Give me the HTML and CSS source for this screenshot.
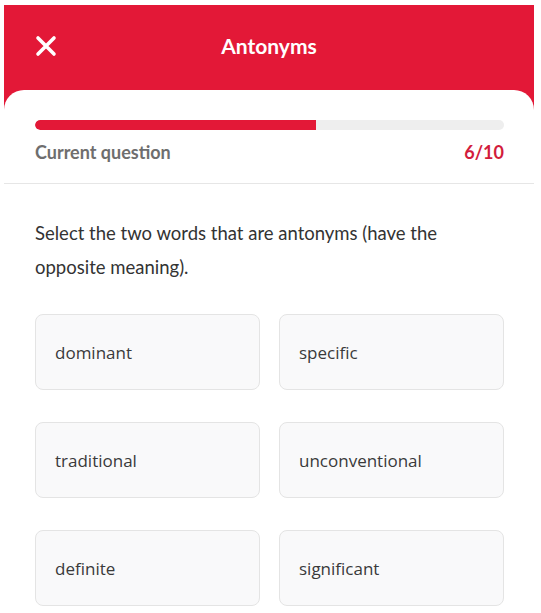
FILE: index.html
```html
<!DOCTYPE html>
<html lang="en">
<head>
  <meta charset="UTF-8" />
  <meta name="viewport" content="width=device-width, initial-scale=1.0"/>
  <title>Antonyms</title>
  <link rel="stylesheet" href="styles.css">
</head>
<body>

<div class="screen">
  <!-- Header -->
  <header class="top-bar">
    <button class="close-btn" aria-label="Close">
      <svg width="22" height="22" viewBox="0 0 22 22">
        <path d="M3 3 L19 19 M19 3 L3 19" stroke="#fff" stroke-width="3.6" stroke-linecap="round" fill="none"/>
      </svg>
    </button>
    <h1 class="title">Antonyms</h1>
  </header>

  <!-- Quiz card -->
  <main class="card">
    <div class="progress">
      <div class="progress-track">
        <div class="progress-fill" style="width: 60%"></div>
      </div>
      <div class="progress-info">
        <span class="progress-label">Current question</span>
        <span class="progress-count">6/10</span>
      </div>
    </div>

    <div class="question">
      <p class="question-text">Select the two words that are antonyms (have the opposite meaning).</p>
      <div class="options">
        <button class="option">dominant</button>
        <button class="option">specific</button>
        <button class="option">traditional</button>
        <button class="option">unconventional</button>
        <button class="option">definite</button>
        <button class="option">significant</button>
      </div>
    </div>
  </main>
</div>

</body>
</html>
```

FILE: styles.css
```css
body {
  margin: 0;
  background: #fff;
  font-family: Lato, "Liberation Sans", sans-serif;
}
.screen {
  margin: 5px 7px 0 4px;
}
.top-bar {
  background: #e31837;
  height: 105px;
  display: flex;
  align-items: flex-start;
  padding: 0 31px;
  position: relative;
}
.close-btn {
  background: none;
  border: none;
  padding: 0;
  margin-top: 30px;
  width: 22px;
  height: 22px;
  cursor: pointer;
}
.title {
  flex: 1;
  margin: 28px 22px 0 0;
  color: #fff;
  font-size: 21px;
  font-weight: 700;
  text-align: center;
}
.card {
  background: #fff;
  border-radius: 20px 20px 0 0;
  margin-top: -20px;
  position: relative;
}
.progress {
  padding: 30px 30px 0 31px;
  border-bottom: 1px solid #e6e6e6;
  height: 63px;
}
.progress-track {
  height: 10px;
  border-radius: 5px;
  background: #eeeeee;
  overflow: hidden;
}
.progress-fill {
  height: 100%;
  background: #e31837;
  border-radius: 5px 0 0 5px;
}
.progress-info {
  display: flex;
  justify-content: space-between;
  margin-top: 11px;
  font-size: 18px;
  font-weight: 700;
}
.progress-label {
  color: #6e6e6e;
}
.progress-count {
  color: #d21c3c;
}
.question {
  padding: 32px 30px 0 31px;
}
.question-text {
  margin: 0;
  font-size: 18.5px;
  line-height: 34px;
  color: #333;
}
.options {
  display: grid;
  grid-template-columns: 1fr 1fr;
  column-gap: 19px;
  row-gap: 32px;
  margin-top: 30px;
}
.option {
  height: 76px;
  text-align: left;
  padding: 0 19px;
  background: #f9f9fa;
  border: 1px solid #e4e4e4;
  border-radius: 8px;
  font-family: "Open Sans", sans-serif;
  font-size: 17px;
  color: #3a3a3a;
  cursor: pointer;
}
```
